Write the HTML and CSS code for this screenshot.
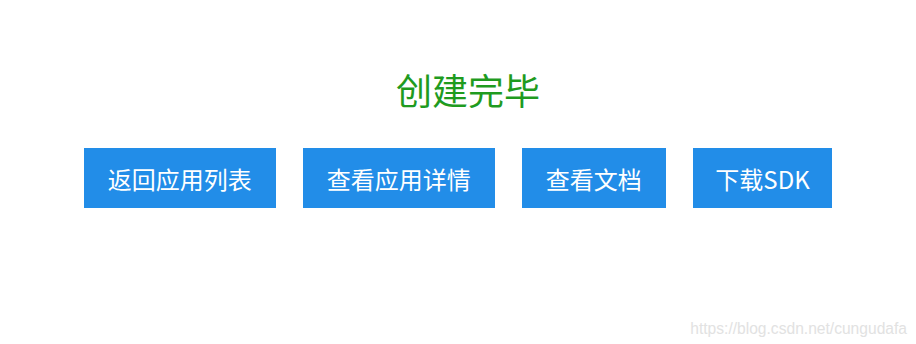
FILE: index.html
```
<!DOCTYPE html>
<html lang="zh-CN">

<head>
    <meta charset="UTF-8">
    <meta name="viewport" content="width=device-width, initial-scale=1.0">
    <title>创建完毕</title>
    <link rel="stylesheet" href="styles.css">
</head>

<body>
    <div class="container">
        <h2 class="title">创建完毕</h2>
        <div class="btn-row">
            <button class="btn">返回应用列表</button>
            <button class="btn">查看应用详情</button>
            <button class="btn">查看文档</button>
            <button class="btn btn-sdk">下载SDK</button>
        </div>
    </div>
    <div class="watermark">https://blog.csdn.net/cungudafa</div>
</body>

</html>
```

FILE: styles.css
```
body {
    font-family: "Noto Sans CJK SC", "Noto Sans", sans-serif;
    margin: 0;
    background-color: #fff;
}

.container {
    height: 344px;
    padding-top: 61px;
    box-sizing: border-box;
}

.title {
    margin: 0 0 31px;
    padding-left: 20px;
    text-align: center;
    font-size: 36px;
    font-weight: normal;
    line-height: 56px;
    color: #1f9b1f;
}

.btn-row {
    display: flex;
    justify-content: center;
    gap: 27px;
}

.btn {
    height: 60px;
    padding: 0 24px;
    font-family: inherit;
    font-size: 24px;
    color: #fff;
    background-color: #228de8;
    border: none;
    border-radius: 0;
    cursor: pointer;
}

.btn-sdk {
    padding: 0 22.5px;
}

.watermark {
    position: absolute;
    right: 9px;
    bottom: 6px;
    font-family: "Liberation Sans", Arial, sans-serif;
    font-size: 15.6px;
    color: #e2e2e2;
}
```
